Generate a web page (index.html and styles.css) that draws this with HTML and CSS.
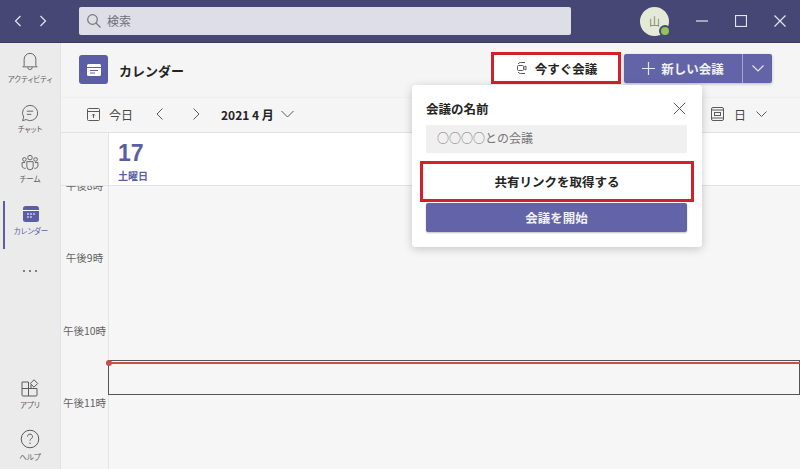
FILE: index.html
```html
<!DOCTYPE html>
<html lang="ja">
<head>
    <meta charset="UTF-8">
    <meta name="viewport" content="width=device-width, initial-scale=1.0">
    <title>カレンダー</title>
    <link rel="stylesheet" href="styles.css">
</head>
<body>
    <header class="topbar">
        <div class="history">
            <svg width="12" height="14" viewBox="0 0 12 14"><path d="M8.5 2 3.5 7l5 5" class="line-light"/></svg>
            <svg width="12" height="14" viewBox="0 0 12 14"><path d="M3.5 2l5 5-5 5" class="line-light"/></svg>
        </div>
        <div class="search">
            <svg width="16" height="16" viewBox="0 0 16 16"><circle cx="6.5" cy="6.5" r="4.8" class="line-grey"/><path d="M10 10l4.5 4.5" class="line-grey"/></svg>
            <span>検索</span>
        </div>
        <div class="avatar">山<span class="presence"></span></div>
        <div class="window-controls">
            <svg width="12" height="12" viewBox="0 0 12 12"><path d="M0 6h12" class="line-light"/></svg>
            <svg width="12" height="12" viewBox="0 0 12 12"><rect x=".5" y=".5" width="11" height="11" class="line-light"/></svg>
            <svg width="12" height="12" viewBox="0 0 12 12"><path d="M.5.5l11 11M11.5.5l-11 11" class="line-light"/></svg>
        </div>
    </header>

    <div class="app">
        <nav class="rail">
            <a class="rail-item">
                <svg width="18" height="20" viewBox="0 0 20 22"><path d="M3.5 16V9a6.500 6.500 0 0 1 13 0v7l1.500 1.500H2zM7.500 18a2.500 2.500 0 0 0 5 0" class="line-dark"/></svg>
                <span>アクティビティ</span>
            </a>
            <a class="rail-item rail-low">
                <svg width="18" height="18" viewBox="0 0 20 20"><path d="M10 1.500a8.500 8.500 0 1 1-4.300 15.800L1.800 18.500l1.200-3.900A8.500 8.500 0 0 1 10 1.500zM6.500 8h7M6.500 11.500h5" class="line-dark"/></svg>
                <span>チャット</span>
            </a>
            <a class="rail-item rail-low">
                <svg width="18" height="18" viewBox="0 0 20 20"><circle cx="10" cy="4" r="2.500" class="line-dark"/><circle cx="3.800" cy="6" r="2" class="line-dark"/><circle cx="16.200" cy="6" r="2" class="line-dark"/><path d="M6.500 8.500h7V14a3.500 3.500 0 0 1-7 0zM4.500 9.500H1.200V13a3 3 0 0 0 4 2.800M15.500 9.500h3.300V13a3 3 0 0 1-4 2.800" class="line-dark"/></svg>
                <span>チーム</span>
            </a>
            <a class="rail-item rail-active">
                <svg width="18" height="18" viewBox="0 0 18 18"><rect x="1" y="1" width="16" height="16" rx="2.500" class="fill-purple"/><path d="M1 5.500h16" class="line-white"/><path d="M5 9h2M8 9h2M11 9h2M5 12h2M8 12h2" class="line-white"/></svg>
                <span>カレンダー</span>
            </a>
            <a class="rail-more">
                <svg width="16" height="4" viewBox="0 0 16 4"><circle cx="2" cy="2" r="1.100" class="dot"/><circle cx="8" cy="2" r="1.100" class="dot"/><circle cx="14" cy="2" r="1.100" class="dot"/></svg>
            </a>
            <a class="rail-item rail-apps">
                <svg width="18" height="18" viewBox="0 0 18 18"><path d="M1 3h6.500v14H2a1 1 0 0 1-1-1zM1 9.500h15V16a1 1 0 0 1-1 1H7.500M10 5.500V9.500h6" class="line-dark"/><path d="M13 .8l3.700 3.700-3.700 3.700-3.700-3.700z" class="line-dark"/></svg>
                <span>アプリ</span>
            </a>
            <a class="rail-item rail-help">
                <svg width="20" height="20" viewBox="0 0 20 20"><circle cx="10" cy="10" r="8.800" class="line-dark"/><path d="M7.500 7.500a2.500 2.500 0 1 1 3.800 2.200c-.9.500-1.300 1-1.300 2" class="line-dark"/><circle cx="10" cy="14.300" r=".8" class="dot"/></svg>
                <span>ヘルプ</span>
            </a>
        </nav>

        <main class="content">
            <div class="title-row">
                <div class="title-icon">
                    <svg width="14" height="14" viewBox="0 0 14 14"><rect x="0" y="1" width="14" height="12" rx="1.500" class="fill-white"/><path d="M0 4.500h14" class="line-purple"/><path d="M3 7.500h8M3 10h5" class="line-purple"/></svg>
                </div>
                <h1>カレンダー</h1>
                <div class="meet-actions">
                    <button class="meet-now">
                        <svg width="14" height="14" viewBox="0 0 14 14"><path d="M10 1.500H5.500A3 3 0 0 0 3 3M10 12.500H5.500A3 3 0 0 1 3 11" class="line-dark"/><rect x="2.500" y="4.500" width="6" height="5" rx="1" class="line-dark"/><path d="M8.500 6.500l2.500-1.500v4L8.500 7.500" class="line-dark"/></svg>
                        今すぐ会議
                    </button>
                    <div class="new-meeting">
                        <button class="new-main">
                            <svg width="13" height="13" viewBox="0 0 13 13"><path d="M6.500 0v13M0 6.500h13" class="line-light"/></svg>
                            新しい会議
                        </button>
                        <button class="new-arrow">
                            <svg width="12" height="7" viewBox="0 0 12 7"><path d="M.5.5 6 6 11.500.5" class="line-light"/></svg>
                        </button>
                    </div>
                </div>
            </div>

            <div class="tool-row">
                <svg width="13" height="13" viewBox="0 0 13 13"><rect x=".5" y=".5" width="12" height="12" rx="1" class="line-dark"/><path d="M.5 3.500h12M6.500 10V6M5 7.500l1.500-1.500L8 7.500" class="line-dark"/></svg>
                <span class="today">今日</span>
                <svg class="nav-prev" width="9" height="14" viewBox="0 0 9 14"><path d="M7.500 1.500 2 7l5.500 5.500" class="line-dark"/></svg>
                <svg class="nav-next" width="9" height="14" viewBox="0 0 9 14"><path d="M1.500 1.500 7 7l-5.500 5.500" class="line-dark"/></svg>
                <strong class="month">2021 4 月</strong>
                <svg width="13" height="8" viewBox="0 0 13 8"><path d="M.5 1 6.500 7l6-6" class="line-dark"/></svg>
                <div class="view-switch">
                    <svg width="13" height="14" viewBox="0 0 13 14"><rect x=".5" y=".5" width="12" height="13" rx="1.500" class="line-dark"/><path d="M.5 3h12M.5 11h12" class="line-dark"/><rect x="3.500" y="5.500" width="6" height="3" class="line-dark"/></svg>
                    <span>日</span>
                    <svg width="11" height="7" viewBox="0 0 11 7"><path d="M.5.5l5 5 5-5" class="line-dark"/></svg>
                </div>
            </div>

            <div class="day-row">
                <div class="gutter"></div>
                <div class="day-head">
                    <div class="day-num">17</div>
                    <div class="day-name">土曜日</div>
                </div>
            </div>

            <div class="grid">
                <div class="hours">
                    <div class="hour">午後8時</div>
                    <div class="hour">午後9時</div>
                    <div class="hour">午後10時</div>
                    <div class="hour">午後11時</div>
                </div>
                <div class="slots">
                    <div class="selected-slot"></div>
                    <div class="now-line"></div>
                </div>
            </div>
        </main>
    </div>

    <!-- 今すぐ会議のポップアップ -->
    <div class="popup">
        <div class="popup-head">
            <span>会議の名前</span>
            <svg width="13" height="13" viewBox="0 0 13 13"><path d="M.8.8l11.400 11.400M12.200.8.8 12.200" class="line-dark"/></svg>
        </div>
        <div class="popup-input">○○○○との会議</div>
        <button class="popup-link">共有リンクを取得する</button>
        <button class="popup-start">会議を開始</button>
    </div>
</body>
</html>
```

FILE: styles.css
```css
* { box-sizing: border-box; }
html, body { margin: 0; height: 100%; overflow: hidden; }
body { font-family: "Noto Sans CJK JP", "Liberation Sans", sans-serif; color: #252423; background: #f5f5f5; display: flex; flex-direction: column; }
button { font-family: inherit; border: none; margin: 0; padding: 0; }
svg { display: block; flex: none; }

.line-light { fill: none; stroke: #e4e4ee; stroke-width: 1.200; }
.line-grey { fill: none; stroke: #77777d; stroke-width: 1.200; }
.line-dark { fill: none; stroke: #5a5a5a; stroke-width: 1; }
.line-white { fill: none; stroke: #fff; stroke-width: 1; }
.line-purple { fill: none; stroke: #6264a7; stroke-width: 1; }
.fill-purple { fill: #5b5ea6; }
.fill-white { fill: #fff; }
.dot { fill: #666; }

/* top bar */
.topbar { height: 43px; flex: none; background: #464775; border-bottom: 1px solid #3b3a5e; display: flex; align-items: center; }
.history { display: flex; gap: 13px; width: 79px; padding-left: 12px; }
.search { width: 492px; height: 28px; margin-bottom: 1px; background: #dedee6; border-radius: 2px; display: flex; align-items: center; gap: 5px; padding-left: 7px; font-size: 12px; color: #6f7080; }
.avatar { position: relative; width: 29px; height: 29px; margin-left: 69px; border-radius: 50%; background: #e5ead8; color: #7d8468; font-size: 11px; display: flex; align-items: center; justify-content: center; }
.presence { position: absolute; right: -2px; bottom: -1px; width: 12px; height: 12px; border-radius: 50%; background: #92c353; border: 2px solid #464775; }
.window-controls { display: flex; gap: 27px; margin-left: 27px; align-items: center; }

/* page body */
.app { flex: 1; display: flex; min-height: 0; }
.rail { width: 61px; flex: none; background: #ebebeb; border-right: 1px solid #e2e2e2; display: flex; flex-direction: column; padding-top: 8px; }
.rail-item { height: 50px; flex: none; display: flex; flex-direction: column; align-items: center; justify-content: flex-start; gap: 2px; font-size: 7.500px; color: #616161; white-space: nowrap; font-feature-settings: "palt"; }
.rail-item span { line-height: 11px; }
.rail-low { padding-top: 3px; gap: 1px; }
.rail-active { color: #5b5ea6; border-left: 2px solid #5b5ea6; margin-left: 3px; margin-right: 3px; padding-top: 4px; height: 48px; }
.rail-more { height: 30px; margin-top: 6px; padding-top: 14px; display: flex; justify-content: center; }
.rail-apps { margin-top: auto; }
.rail-help { height: 40px; }

.content { flex: 1; min-width: 0; display: flex; flex-direction: column; }

.title-row { height: 54px; flex: none; display: flex; align-items: center; padding-left: 18px; background: #f5f5f5; }
.title-icon { width: 29px; height: 29px; border-radius: 3px; background: #5b5ea6; display: flex; align-items: center; justify-content: center; margin-top: -1px; }
h1 { margin: 0 0 0 11px; font-size: 13px; font-weight: 700; color: #252423; }
.meet-actions { margin-left: auto; margin-right: 28px; display: flex; align-items: center; gap: 3px; margin-top: -4px; }
.meet-now { position: relative; width: 130px; height: 32px; background: #fff; outline: 3px solid #d3202c; outline-offset: -3px; font-size: 12.500px; font-weight: 700; color: #252423; display: flex; align-items: center; justify-content: center; gap: 6px; }
.new-meeting { display: flex; height: 29px; border-radius: 2px; overflow: hidden; box-shadow: 0 1px 3px rgba(0,0,0,.25); }
.new-meeting button { background: #6264a7; color: #f0f0f6; font-size: 12.500px; font-weight: 700; display: flex; align-items: center; justify-content: center; }
.new-main { width: 119px; gap: 6px; border-right: 1px solid #a5a6cc; }
.new-arrow { width: 29px; }

.tool-row { height: 36px; flex: none; display: flex; align-items: center; padding-left: 26px; padding-bottom: 2px; border-top: 1px solid #efefef; border-bottom: 1px solid #e2e2e2; font-size: 12px; color: #484644; }
.today { margin-left: 9px; }
.nav-prev { margin-left: 22px; }
.nav-next { margin-left: 28px; }
.month { margin-left: 20px; color: #252423; font-weight: 700; }
.tool-row .month + svg { margin-left: 7px; }
.view-switch { margin-left: auto; margin-right: 33px; display: flex; align-items: center; gap: 10px; }

.day-row { height: 53px; flex: none; display: flex; border-bottom: 1px solid #e4e4e4; }
.gutter { width: 47px; flex: none; }
.day-head { flex: 1; background: #fff; border-left: 1px solid #e4e4e4; padding: 7px 0 0 9px; color: #5b5ea6; }
.day-num { font-family: "Liberation Sans", sans-serif; font-size: 23px; font-weight: 700; line-height: 26px; }
.day-name { font-size: 10px; font-weight: 700; line-height: 15px; margin-top: 2px; }

.grid { flex: 1; min-height: 0; display: flex; overflow: hidden; }
.hours { width: 47px; flex: none; display: flex; flex-direction: column; margin-top: -7px; }
.hour { height: 72.300px; flex: none; font-size: 10.500px; line-height: 14px; color: #616161; text-align: center; white-space: nowrap; }
.slots { position: relative; flex: 1; border-left: 1px solid #e4e4e4; background: #f6f6f6; }
.now-line { position: absolute; left: -3px; right: 0; top: 176px; height: 2px; background: #c4524a; }
.now-line::before { content: ""; position: absolute; left: 0; top: -2px; width: 6px; height: 6px; border-radius: 50%; background: #c4524a; }
.selected-slot { position: absolute; left: -1px; right: 0; top: 174px; height: 35px; border: 1px solid #555; }

/* popup */
.popup { position: absolute; left: 412px; top: 85px; width: 290px; height: 162px; background: #fff; border-radius: 3px; box-shadow: 0 2px 10px rgba(0,0,0,.2); padding: 14px 15px 0 14px; }
.popup-head { display: flex; justify-content: space-between; align-items: center; font-size: 12.500px; font-weight: 700; color: #252423; padding-right: 1px; height: 18px; }
.popup-input { height: 28px; margin-top: 8px; background: #f0f0f0; font-size: 12px; color: #777; line-height: 25px; padding-left: 11px; }
.popup-link { display: block; width: 274px; height: 41px; margin: 8px 0 0 -6px; background: #fff; outline: 3px solid #d3202c; outline-offset: -3px; font-size: 12.500px; font-weight: 700; color: #252423; }
.popup-start { display: block; width: 261px; height: 29px; margin-top: 1px; background: #6264a7; border-radius: 2px; box-shadow: 0 1px 2px rgba(0,0,0,.25); font-size: 12.500px; font-weight: 700; color: #f0f0f6; }
```
